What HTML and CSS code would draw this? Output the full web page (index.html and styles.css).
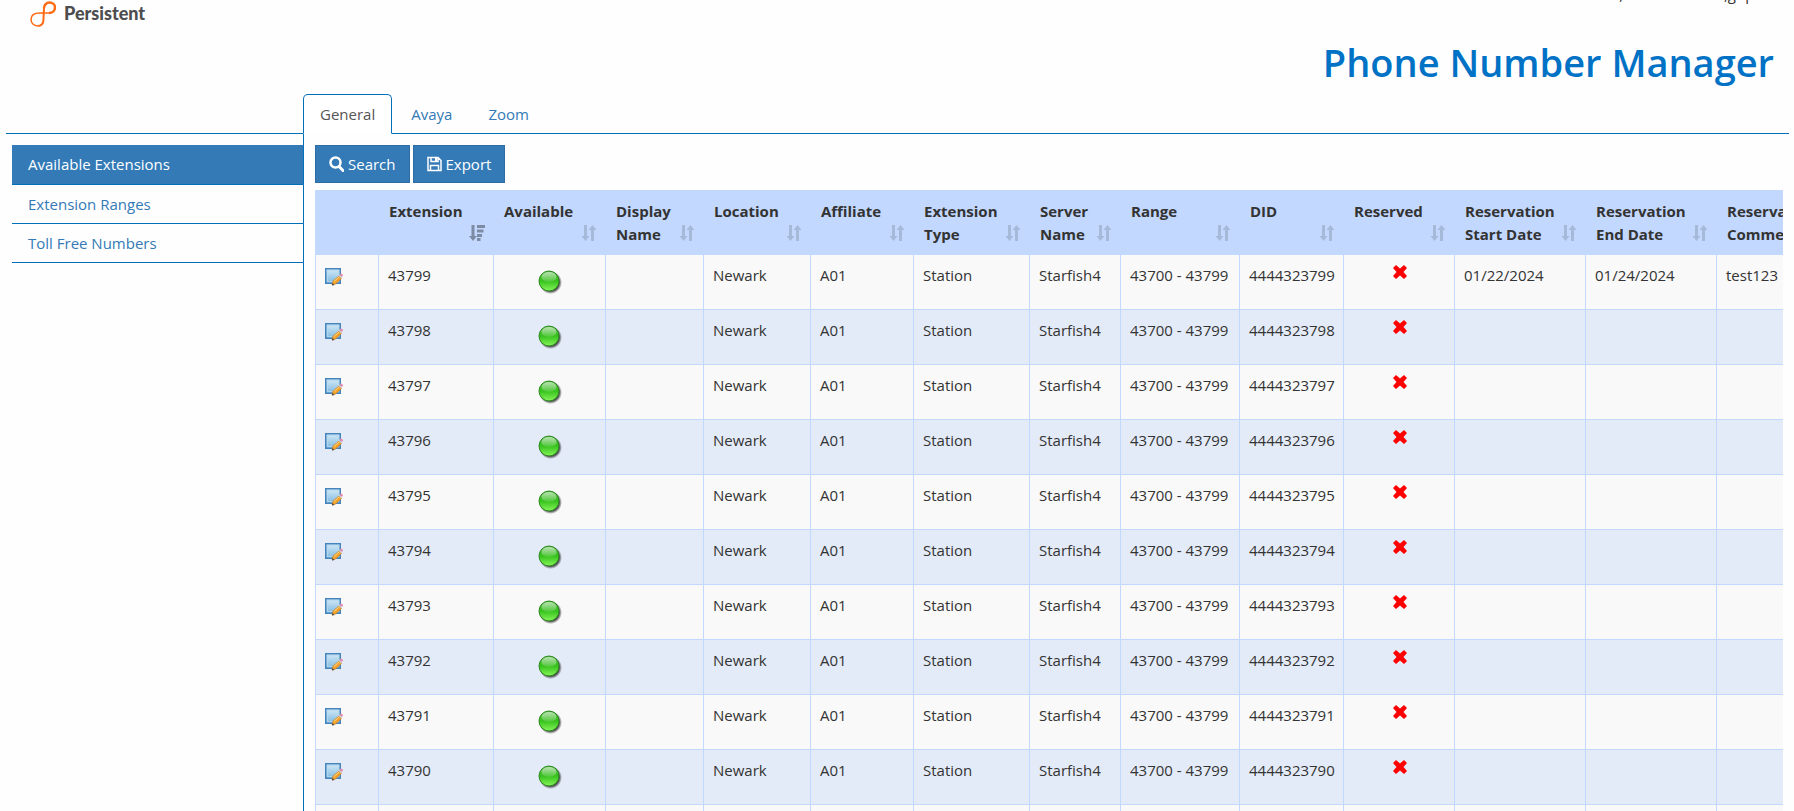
FILE: index.html
```html
<!DOCTYPE html>
<html lang="en">

<head>
    <meta charset="UTF-8">
    <meta name="viewport" content="width=device-width, initial-scale=1.0">
    <title>Phone Number Manager</title>
    <link rel="stylesheet" href="styles.css">
</head>

<body>
    <svg class="sprite" aria-hidden="true">
        <defs>
            <linearGradient id="note-fill" x1="0" y1="0" x2="0" y2="1">
                <stop offset="0" stop-color="#d3e9f6"/>
                <stop offset="1" stop-color="#7fb9e0"/>
            </linearGradient>
            <linearGradient id="ball-fill" x1="0" y1="0" x2="0" y2="1">
                <stop offset="0" stop-color="#4cb53a"/>
                <stop offset="0.5" stop-color="#36c21c"/>
                <stop offset="1" stop-color="#86f55a"/>
            </linearGradient>
            <linearGradient id="ball-shine" x1="0" y1="0" x2="0" y2="1">
                <stop offset="0" stop-color="#fff" stop-opacity="0.6"/>
                <stop offset="1" stop-color="#fff" stop-opacity="0.1"/>
            </linearGradient>
            <radialGradient id="ball-shadow">
                <stop offset="0.75" stop-color="#222" stop-opacity="0.8"/>
                <stop offset="1" stop-color="#222" stop-opacity="0"/>
            </radialGradient>
        </defs>
        <symbol id="icon-edit" viewBox="0 0 18 18">
            <rect x="0.5" y="0.5" width="15" height="15" fill="#fff" stroke="#3f7fb8"/>
            <rect x="1" y="1" width="14" height="14" fill="url(#note-fill)" stroke="#4a88bd"/>
            <rect x="2.5" y="2.5" width="11" height="11" fill="none" stroke="#b5d9f0" opacity="0.8"/>
            <path d="M7 17l1-4 6-5 2.500 2.500-6 5.500z" fill="#f6a32b" stroke="#c47a1c" stroke-width="0.6"/>
            <path d="M9 13.500l5-4.500" stroke="#ffd98a" stroke-width="1"/>
            <path d="M13.500 7.500l1-1 2.500 2.500-1 1.500z" fill="#ccc"/>
            <path d="M14.500 6.500l1.500-1q2 .5 2 2l-1 1.500z" fill="#e58cb4"/>
            <path d="M7 17.500l.5-2.500 2 2z" fill="#444"/>
        </symbol>
        <symbol id="icon-ball" viewBox="0 0 24 24">
            <circle cx="12.500" cy="12.500" r="11.500" fill="url(#ball-shadow)"/>
            <circle cx="11" cy="11" r="10" fill="url(#ball-fill)" stroke="#2b8a1e"/>
            <ellipse cx="11" cy="7" rx="7.500" ry="5" fill="url(#ball-shine)"/>
        </symbol>
        <symbol id="icon-sort" viewBox="0 0 16 16">
            <path d="M3 0h3v11h2.500L4.500 16 .5 11H3z"/>
            <path d="M10 16h3V5h2.500L11.500 0l-4 5H10z"/>
        </symbol>
        <symbol id="icon-sort-desc" viewBox="0 0 16 16">
            <path d="M2.500 0h3v11H8l-4 5-4-5h2.500z"/>
            <path d="M8 0h8v3H8zM8 4.500h6.500v3H8zM8 9h5v3H8zM8 13h3.500v3H8z"/>
        </symbol>
        <symbol id="icon-cross" viewBox="0 0 14 14">
            <path d="M0 3l3-3 4 3.500L11 0l3 3-3.500 4 3.500 4-3 3-4-3.500L3 14l-3-3 3.500-4z"/>
        </symbol>
    </svg>

    <header class="top">
        <a class="logo" href="#">
            <svg width="26" height="26" viewBox="0 0 26 26" aria-hidden="true">
                <path d="M19 12C22.500 12 25 9.500 25 6.500S22.500 1.500 19.500 1.500 14 4 14 7" fill="none" stroke="#ff6a13" stroke-width="2.500"/>
                <path d="M14 6.500L13.500 18C13.500 22 11.500 25 7.500 25" fill="none" stroke="#ff6a13" stroke-width="2"/>
                <path d="M19.500 12H10C5 12 1 14 1 18.500 1 22 4 25 7.500 25" fill="none" stroke="#ff6a13" stroke-width="1.500"/>
            </svg>
            <span>Persistent</span>
        </a>
        <div class="user">Welcome, Administrator,gupta</div>
        <h1>Phone Number Manager</h1>
    </header>

    <ul class="tabs">
        <li class="active"><a href="#">General</a></li>
        <li><a href="#">Avaya</a></li>
        <li><a href="#">Zoom</a></li>
    </ul>

    <div class="main">
        <ul class="side">
            <li class="active"><a href="#">Available Extensions</a></li>
            <li><a href="#">Extension Ranges</a></li>
            <li><a href="#">Toll Free Numbers</a></li>
        </ul>

        <div class="content">
            <div class="buttons">
                <button type="button" class="btn">
                    <svg width="15" height="16" viewBox="0 0 15 16" aria-hidden="true">
                        <circle cx="6.500" cy="6.500" r="5" fill="none" stroke="#fff" stroke-width="2.500"/>
                        <path d="M10 10.500l4 4" stroke="#fff" stroke-width="3" stroke-linecap="round"/>
                    </svg>
                    Search
                </button>
                <button type="button" class="btn">
                    <svg width="15" height="16" viewBox="0 0 15 16" aria-hidden="true">
                        <path d="M1 1.500h10l3 3v10H1zM4 1.500v4h7v-4M3.500 14.500v-5h8v5" fill="none" stroke="#fff" stroke-width="1.500"/>
                        <path d="M8 2h2v3H8z" fill="#fff"/>
                    </svg>
                    Export
                </button>
            </div>

            <div class="table-wrap">
                <table>
                    <colgroup>
                        <col class="c-edit"><col class="c-ext"><col class="c-avail"><col class="c-name">
                        <col class="c-loc"><col class="c-aff"><col class="c-type"><col class="c-server">
                        <col class="c-range"><col class="c-did"><col class="c-res"><col class="c-date">
                        <col class="c-date"><col class="c-date">
                    </colgroup>
                    <thead>
                        <tr>
                            <th></th>
                            <th>Extension<svg class="sort on"><use href="#icon-sort-desc"/></svg></th>
                            <th>Available<svg class="sort"><use href="#icon-sort"/></svg></th>
                            <th>Display<br>Name<svg class="sort"><use href="#icon-sort"/></svg></th>
                            <th>Location<svg class="sort"><use href="#icon-sort"/></svg></th>
                            <th>Affiliate<svg class="sort"><use href="#icon-sort"/></svg></th>
                            <th>Extension<br>Type<svg class="sort"><use href="#icon-sort"/></svg></th>
                            <th>Server<br>Name<svg class="sort"><use href="#icon-sort"/></svg></th>
                            <th>Range<svg class="sort"><use href="#icon-sort"/></svg></th>
                            <th>DID<svg class="sort"><use href="#icon-sort"/></svg></th>
                            <th>Reserved<svg class="sort"><use href="#icon-sort"/></svg></th>
                            <th>Reservation<br>Start Date<svg class="sort"><use href="#icon-sort"/></svg></th>
                            <th>Reservation<br>End Date<svg class="sort"><use href="#icon-sort"/></svg></th>
                            <th>Reservation<br>Comments<svg class="sort"><use href="#icon-sort"/></svg></th>
                        </tr>
                    </thead>
                    <tbody id="rows"></tbody>
                </table>
            </div>
        </div>
    </div>

    <script src="script.js"></script>
</body>

</html>
```
FILE: styles.css
```css
* {
    box-sizing: border-box;
}

body {
    margin: 0;
    height: 100vh;
    overflow: hidden;
    display: flex;
    flex-direction: column;
    font-family: "Open Sans", "Noto Sans", sans-serif;
    font-size: 15px;
    line-height: 23px;
    color: #333;
    background: #fefefe;
}

a {
    color: #337ab7;
    text-decoration: none;
}

ul {
    list-style: none;
    margin: 0;
    padding: 0;
}

.sprite {
    position: absolute;
    width: 0;
    height: 0;
}

/* header */
.top {
    position: relative;
    height: 94px;
    flex: none;
    padding: 0 20px 0 30px;
}

.logo {
    display: flex;
    align-items: center;
    gap: 8px;
    height: 27px;
    width: 160px;
    color: #4d4d4f;
    font-family: Lato, sans-serif;
    font-size: 18px;
    font-weight: 900;
}

.user {
    position: absolute;
    top: -17px;
    right: 26px;
}

h1 {
    margin: 7px 0 0;
    text-align: right;
    font-size: 38px;
    font-weight: 600;
    line-height: 56px;
    color: #0072c6;
}

/* tabs */
.tabs {
    display: flex;
    gap: 2px;
    flex: none;
    height: 40px;
    margin: 0 5px 0 6px;
    padding-left: 297px;
    border-bottom: 1px solid #0070ba;
}

.tabs li {
    height: 40px;
    padding: 8px 16px;
    border: 1px solid transparent;
}

.tabs .active {
    background: #fff;
    border-color: #0070ba;
    border-bottom-color: #fff;
    border-radius: 5px 5px 0 0;
}

.tabs .active a {
    color: #555;
}

/* body */
.main {
    display: flex;
    flex: 1;
    min-height: 0;
    padding-left: 12px;
}

.side {
    width: 291px;
    flex: none;
    padding-top: 11px;
}

.side li {
    height: 39px;
    padding: 8px 16px;
    border-bottom: 1px solid #0070ba;
}

.side .active {
    height: 40px;
    background: #337ab7;
}

.side .active a {
    color: #fff;
}

.content {
    flex: 1;
    min-width: 0;
    padding: 11px 11px 0;
    border-left: 1px solid #0070ba;
    overflow: hidden;
}

.buttons {
    display: flex;
    gap: 3px;
    margin-bottom: 7px;
}

.btn {
    display: flex;
    align-items: center;
    gap: 4px;
    height: 38px;
    padding: 0 13px;
    background: #337ab7;
    border: 1px solid #2e6da4;
    color: #fff;
    font: inherit;
    cursor: pointer;
}

/* table */
.table-wrap {
    overflow: hidden;
}

table {
    width: 1532px;
    table-layout: fixed;
    border-collapse: separate;
    border-spacing: 0;
}

.c-edit { width: 63px; }
.c-ext { width: 115px; }
.c-avail { width: 112px; }
.c-name { width: 98px; }
.c-loc { width: 107px; }
.c-aff { width: 103px; }
.c-type { width: 116px; }
.c-server { width: 91px; }
.c-range { width: 119px; }
.c-did { width: 104px; }
.c-res { width: 111px; }
.c-date { width: 131px; }

th {
    position: relative;
    height: 65px;
    padding: 10px 0 9px 11px;
    background: #c3d8ff;
    text-align: left;
    vertical-align: top;
    white-space: nowrap;
}

.sort {
    position: absolute;
    right: 8px;
    bottom: 14px;
    width: 16px;
    height: 16px;
    fill: #a5b9d9;
}

.sort.on {
    fill: #7d8ba5;
}

td {
    height: 55px;
    padding: 9px 8px 9px 9px;
    border-left: 1px solid #c3d8ff;
    border-bottom: 1px solid #c3d8ff;
    background: #f9f9f9;
    vertical-align: top;
    white-space: nowrap;
}

tr:nth-child(even) td {
    background: #e4ebf8;
}

td a,
td svg {
    display: block;
}

.edit {
    width: 18px;
    height: 18px;
    margin: 4px 0;
}

.ball {
    width: 24px;
    height: 24px;
    margin: 6px auto 0;
}

.cross {
    width: 14px;
    height: 14px;
    margin: 1px auto 0;
    fill: #f00;
}
```
FILE: script.js
```javascript
const rows = document.getElementById('rows');

for (let ext = 43799; ext >= 43789; ext--) {
    const reserved = ext === 43799;
    rows.innerHTML += `
        <tr>
            <td><a href="#" aria-label="Edit ${ext}"><svg class="edit"><use href="#icon-edit"/></svg></a></td>
            <td>${ext}</td>
            <td><svg class="ball"><use href="#icon-ball"/></svg></td>
            <td></td>
            <td>Newark</td>
            <td>A01</td>
            <td>Station</td>
            <td>Starfish4</td>
            <td>43700 - 43799</td>
            <td>44443${ext - 20000}</td>
            <td><svg class="cross"><use href="#icon-cross"/></svg></td>
            <td>${reserved ? '01/22/2024' : ''}</td>
            <td>${reserved ? '01/24/2024' : ''}</td>
            <td>${reserved ? 'test123' : ''}</td>
        </tr>`;
}
```
